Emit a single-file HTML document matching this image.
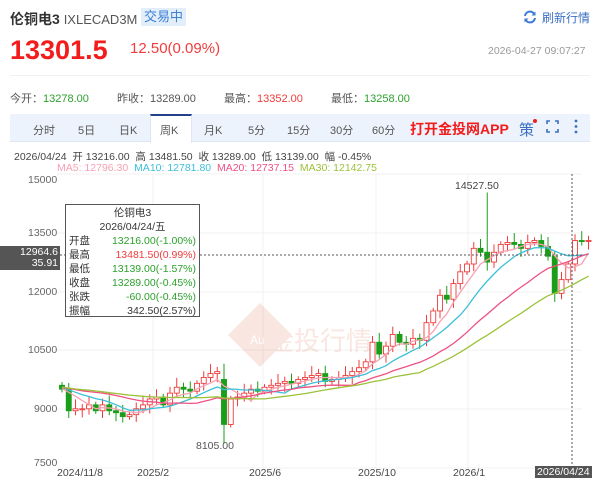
<!DOCTYPE html>
<html><head><meta charset="utf-8"><style>
*{margin:0;padding:0;box-sizing:border-box}
body{width:600px;height:479px;background:#fff;font-family:"Liberation Sans","Noto Sans CJK SC",sans-serif;position:relative;overflow:hidden;color:#333}
.a{position:absolute;white-space:nowrap}
</style></head><body>
<div class="a" style="left:10px;top:9px;font-size:14px;font-weight:bold;color:#333">伦铜电3 <span style="font-weight:normal;font-size:13px;color:#555">IXLECAD3M</span></div>
<div class="a" style="left:141px;top:8px;width:45px;height:18px;background:#e3eefb;color:#3b7fd6;font-size:13px;text-align:center;line-height:18px">交易中</div>
<div class="a" style="left:10px;top:35px;font-size:27px;font-weight:bold;color:#f21c1c">13301.5</div>
<div class="a" style="left:130px;top:40px;font-size:15px;color:#f03c3c">12.50(0.09%)</div>
<svg class="a" style="left:523px;top:10px" width="14" height="14" viewBox="0 0 14 14"><path d="M2 6 A5 5 0 0 1 11.5 4.5" fill="none" stroke="#3a7ad6" stroke-width="2"/><path d="M12 8 A5 5 0 0 1 2.5 9.5" fill="none" stroke="#3a7ad6" stroke-width="2"/><path d="M12.5 1.5 L12.5 5.5 L8.5 5.5Z" fill="#3a7ad6"/><path d="M1.5 12.5 L1.5 8.5 L5.5 8.5Z" fill="#3a7ad6"/></svg>
<div class="a" style="left:542px;top:9px;font-size:12px;color:#3a6fc2">刷新行情</div>
<div class="a" style="left:488px;top:45px;font-size:10.5px;color:#999">2026-04-27 09:07:27</div>
<div class="a" style="left:10px;top:75px;width:580px;height:1px;background:#f0f0f0"></div>
<div class="a" style="left:10px;top:90px;font-size:11px;color:#555">今开：<span style="color:#2ca02c">13278.00</span></div>
<div class="a" style="left:117px;top:90px;font-size:11px;color:#555">昨收：13289.00</div>
<div class="a" style="left:224px;top:90px;font-size:11px;color:#555">最高：<span style="color:#f03c3c">13352.00</span></div>
<div class="a" style="left:331px;top:90px;font-size:11px;color:#555">最低：<span style="color:#2ca02c">13258.00</span></div>
<div class="a" style="left:10px;top:114px;width:580px;height:28px;background:#edf3fc;border-bottom:1px solid #dde6f2"></div>
<div class="a" style="left:150px;top:114px;width:42px;height:29px;background:#fff;border-top:2px solid #23408a;border-left:1px solid #dde6f2;border-right:1px solid #dde6f2"></div>
<div class="a" style="top:122px;left:0;font-size:11px;color:#555;width:600px;height:14px">
<span class="a" style="left:33px">分时</span><span class="a" style="left:78px">5日</span><span class="a" style="left:119px">日K</span><span class="a" style="left:160px">周K</span><span class="a" style="left:204px">月K</span><span class="a" style="left:248px">5分</span><span class="a" style="left:287px">15分</span><span class="a" style="left:330px">30分</span><span class="a" style="left:372px">60分</span></div>
<div class="a" style="left:410px;top:119px;font-size:14px;font-weight:bold;color:#f21c1c">打开金投网APP</div>
<div class="a" style="left:519px;top:119px;font-size:15px;color:#3a6fc2">策</div>
<div class="a" style="left:533px;top:119px;width:4px;height:4px;border-radius:2px;background:#f21c1c"></div>
<svg class="a" style="left:546px;top:120px" width="13" height="13"><path d="M1 4V1H4M9 1H12V4M12 9V12H9M4 12H1V9" fill="none" stroke="#3a6fc2" stroke-width="1.6"/></svg>
<svg class="a" style="left:574px;top:119px" width="4" height="15"><circle cx="2" cy="2" r="1.4" fill="#3a6fc2"/><circle cx="2" cy="7.5" r="1.4" fill="#3a6fc2"/><circle cx="2" cy="13" r="1.4" fill="#3a6fc2"/></svg>
<div class="a" style="left:14px;top:149px;font-size:10.5px;color:#444">2026/04/24 &nbsp;开 13216.00 &nbsp;高 13481.50 &nbsp;收 13289.00 &nbsp;低 13139.00 &nbsp;幅 -0.45%</div>
<div class="a" style="left:57px;top:162px;font-size:10.5px"><span style="color:#f7a1b5">MA5: 12796.30</span> &nbsp;<span style="color:#3cbfd8">MA10: 12781.80</span> &nbsp;<span style="color:#ef5080">MA20: 12737.15</span> &nbsp;<span style="color:#9cc23a">MA30: 12142.75</span></div>
<svg id="c" class="a" style="left:0;top:0" width="600" height="479"></svg>
<div class="a" style="left:28px;top:174px;font-size:10.5px;color:#666">15000</div>
<div class="a" style="left:28px;top:227px;font-size:10.5px;color:#666">13500</div>
<div class="a" style="left:28px;top:286px;font-size:10.5px;color:#666">12000</div>
<div class="a" style="left:28px;top:344px;font-size:10.5px;color:#666">10500</div>
<div class="a" style="left:34px;top:403px;font-size:10.5px;color:#666">9000</div>
<div class="a" style="left:34px;top:457px;font-size:10.5px;color:#666">7500</div>
<div class="a" style="left:0;top:246px;width:60px;height:24px;background:#555;color:#fff;font-size:10.5px;text-align:right;line-height:11px;padding:1px 2px">12964.6<br>35.91</div>
<div class="a" style="left:57px;top:467px;font-size:10.5px;color:#444">2024/11/8</div>
<div class="a" style="left:137px;top:467px;font-size:10.5px;color:#444">2025/2</div>
<div class="a" style="left:249px;top:467px;font-size:10.5px;color:#444">2025/6</div>
<div class="a" style="left:358px;top:467px;font-size:10.5px;color:#444">2025/10</div>
<div class="a" style="left:453px;top:467px;font-size:10.5px;color:#444">2026/1</div>
<div class="a" style="left:535px;top:466px;font-size:10.5px;color:#fff;background:#555;padding:0 2px">2026/04/24</div>
<div class="a" style="left:196px;top:440px;font-size:10.5px;color:#555">8105.00</div>
<div class="a" style="left:455px;top:180px;font-size:10.5px;color:#444">14527.50</div>
<div class="a" style="left:65px;top:204px;width:135px;height:113px;background:#fff;border:1px solid #555;font-size:10.5px;line-height:14px;padding:1px 3px">
<div style="text-align:center">伦铜电3</div><div style="text-align:center">2026/04/24/五</div>
<div>开盘<span style="float:right;color:#2ca02c">13216.00(-1.00%)</span></div>
<div>最高<span style="float:right;color:#f03c3c">13481.50(0.99%)</span></div>
<div>最低<span style="float:right;color:#2ca02c">13139.00(-1.57%)</span></div>
<div>收盘<span style="float:right;color:#2ca02c">13289.00(-0.45%)</span></div>
<div>张跌<span style="float:right;color:#2ca02c">-60.00(-0.45%)</span></div>
<div>振幅<span style="float:right">342.50(2.57%)</span></div>
</div>
<script>
var s=document.getElementById('c'),h='';
function Y(v){return 174+(15000-v)*0.03913}
[174,233,292,350,409,468].forEach(function(y){h+='<line x1="57" x2="582" y1="'+y+'" y2="'+y+'" stroke="#f0f0f0"/>'});
[153,263,376,468].forEach(function(x){h+='<line x1="'+x+'" x2="'+x+'" y1="174" y2="468" stroke="#f0f0f0"/>'});
h+='<g opacity="0.16"><path d="M228 335 L260 303 L292 335 L260 367Z" fill="#e46a4a"/><text x="268" y="350" font-size="26" fill="#e46a4a" font-family="Noto Sans CJK SC">金投行情</text><text x="250" y="344" font-size="12" fill="#fff">Au</text></g>';
var pre=[9600,9650,9700,9550,9500,9600,9700,9650,9500,9400,9450,9500,9550,9600,9500,9400,9450,9500,9550,9600,9650,9700,9650,9600,9550,9500,9450,9500,9550,9600];
var c=[9500,8950,9000,9000,9100,8950,9100,8950,8900,8800,8850,9000,9100,9250,9300,9100,9400,9550,9500,9450,9650,9800,9900,9950,8600,9250,9300,9400,9500,9450,9550,9600,9650,9700,9650,9750,9800,9850,9900,9700,9750,9800,9850,9950,10050,10200,10700,10400,10600,10900,10700,10650,10800,10750,11200,11500,11900,11800,12200,12500,12700,13100,13000,12750,13000,13200,13250,13200,13100,13250,13300,13150,12900,11950,12300,12700,13300,13289,13301];
var all=pre.concat(c);
function ma(n,i){var t=0,k=0;for(var j=i-n+1;j<=i;j++){if(j>=0){t+=all[j];k++}}return t/k}
var W=6.75,x0=62;
var o=pre[pre.length-1];
c.forEach(function(v,i){var x=x0+i*W,op=o,up=v>=op,hi=Math.max(v,op)+80+((i*37)%5)*40,lo=Math.min(v,op)-80-((i*53)%5)*35;
if(i==24){lo=8105;op=9750}if(i==63)hi=14527;
var col=up?'#f03c3c':'#1a9e1a';
h+='<line x1="'+x+'" x2="'+x+'" y1="'+Y(hi)+'" y2="'+Y(lo)+'" stroke="'+col+'"/>';
var t=Y(Math.max(v,op)),b=Y(Math.min(v,op));if(b-t<1)b=t+1;
h+='<rect x="'+(x-2.5)+'" y="'+t+'" width="5" height="'+(b-t)+'" fill="'+(up?'#fff':col)+'" stroke="'+col+'" stroke-width="0.9"/>';o=v});
[[5,'#f7a1b5'],[10,'#3cbfd8'],[20,'#ef5080'],[30,'#9cc23a']].forEach(function(m){var p='';c.forEach(function(v,i){p+=(i?'L':'M')+(x0+i*W).toFixed(1)+' '+Y(ma(m[0],i+pre.length)).toFixed(1)});h+='<path d="'+p+'" fill="none" stroke="'+m[1]+'" stroke-width="1.3"/>'});
h+='<line x1="60" x2="582" y1="255" y2="255" stroke="#555" stroke-dasharray="2,2"/><line x1="572" x2="572" y1="174" y2="468" stroke="#555" stroke-dasharray="2,2"/>';
s.innerHTML=h;
</script>
</body></html>
